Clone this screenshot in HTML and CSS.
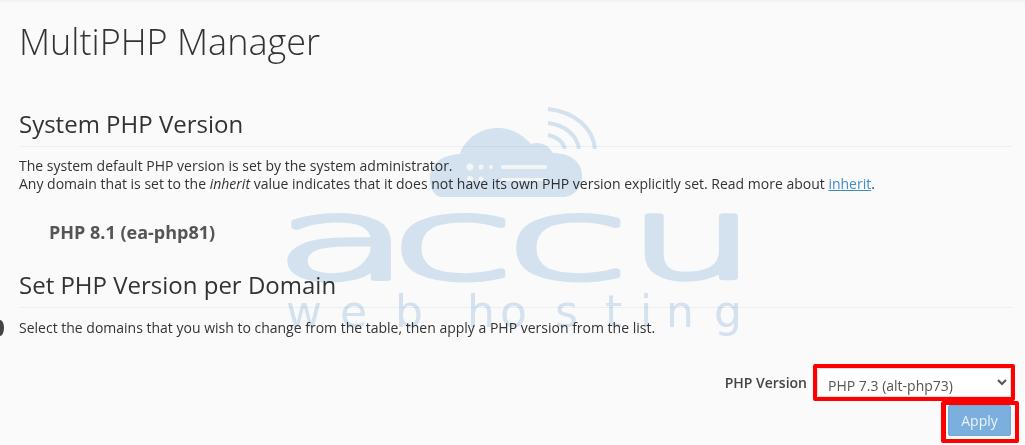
FILE: index.html
```html
<!DOCTYPE html>
<html lang="en">
<head>
    <meta charset="UTF-8">
    <title>MultiPHP Manager</title>
    <link rel="stylesheet" href="styles.css">
</head>
<body>
    <div class="side-dot"></div>
    <div id="app">
        <h1 class="page-title">MultiPHP Manager</h1>

        <h2 class="section-title first">System PHP Version</h2>
        <p class="text">
            The system default PHP version is set by the system administrator.<br>
            Any domain that is set to the <em>inherit</em> value indicates that it does not have its own PHP version explicitly set. Read more about <a href="#">inherit</a>.
        </p>
        <div class="current">PHP 8.1 (ea-php81)</div>

        <h2 class="section-title">Set PHP Version per Domain</h2>
        <p class="text text-select">Select the domains that you wish to change from the table, then apply a PHP version from the list.</p>

        <form class="version-form">
            <div class="version-row">
                <label for="version">PHP Version</label>
                <div class="mark">
                    <select id="version">
                        <option>PHP 7.3 (alt-php73)</option>
                    </select>
                </div>
            </div>
            <div class="mark-apply">
                <button class="btn">Apply</button>
            </div>
        </form>
    </div>

    <!-- watermark -->
    <svg class="watermark" width="1025" height="445" viewBox="0 0 1025 445">
        <path class="cloud" d="M440 197 C432 194 430 186 430 178 C430 164 441 155 460 154 C465 138 481 128 498 128 C511 128 522 134 531 144 C539 141 548 144 553 153 C570 153 582 162 582 175 C582 188 574 197 563 197 Z"/>
        <g class="waves">
            <path d="M548 135 C557 137 563 142 565 149"/>
            <path d="M548 123 C565 125 577 135 579 149"/>
            <path d="M548 109 C574 112 593 127 595 149"/>
        </g>
        <g fill="#fafafa">
            <circle cx="470" cy="167" r="3.5"/>
            <circle cx="481" cy="167" r="2.5"/>
            <circle cx="491" cy="167" r="2"/>
            <rect x="501" y="165" width="46" height="4" rx="2"/>
            <circle cx="470" cy="179" r="3"/>
            <circle cx="481" cy="179" r="2.5"/>
            <rect x="501" y="178" width="46" height="3" rx="1.5"/>
        </g>
        <text class="accu" transform="translate(274 278) scale(2 1)">a</text>
        <text class="accu" transform="translate(391 278) scale(2 1)">c</text>
        <text class="accu" transform="translate(506 278) scale(2 1)">c</text>
        <text class="accu" transform="translate(628 278) scale(1.8 1)">u</text>
        <text class="hosting" x="286 340 395 467 500 555 605 640 666 714" y="327">webhosting</text>
    </svg>
</body>
</html>
```

FILE: styles.css
```css
* {
    margin: 0;
    padding: 0;
    box-sizing: border-box;
}

html, body {
    height: 445px;
    overflow: hidden;
}

body {
    background: #fafafa;
    font-family: "Open Sans", "Liberation Sans", sans-serif;
    font-size: 14px;
    line-height: 18px;
    color: #333;
    position: relative;
}

#app {
    padding: 0 13px 0 19px;
    border-top: 2px solid #f3f3f3;
}

.page-title {
    margin-top: 15px;
    font-size: 36px;
    line-height: 50px;
    font-weight: 300;
}

.section-title {
    margin-top: 23px;
    padding-bottom: 6px;
    border-bottom: 1px solid #eee;
    font-size: 24px;
    line-height: 33px;
    font-weight: 400;
}
.section-title.first {
    margin-top: 40px;
}

.text {
    margin-top: 10px;
}
.text-select {
    margin-top: 11px;
}

a {
    color: #428bca;
}

.current {
    margin-top: 27px;
    margin-left: 30px;
    font-size: 18px;
    line-height: 25px;
    font-weight: 700;
    color: #555;
}

.version-form {
    margin-top: 27px;
    display: flex;
    flex-direction: column;
    align-items: flex-end;
}

.version-row {
    display: flex;
    align-items: center;
    gap: 6px;
    margin-right: -3px;
}
.version-row label {
    font-weight: 600;
    color: #444;
}

.mark {
    border: 4px solid #f00;
    border-radius: 2px;
}

select {
    display: block;
    width: 194px;
    height: 29px;
    padding: 5px 0 0 6px;
    border: 1px solid #ddd;
    border-radius: 2px;
    background: #fff;
    color: #555;
    font-family: inherit;
    font-size: 14px;
}

.mark-apply {
    margin-right: -7px;
    padding: 0 4px 3px 2px;
    border: 4px solid #f00;
    border-left-width: 5px;
    border-radius: 2px;
}

.btn {
    display: block;
    width: 63px;
    height: 31px;
    border: 1px solid #6fa8d8;
    border-radius: 2px;
    background: #7bb0de;
    color: #eaf3fb;
    font-family: inherit;
    font-size: 14px;
    cursor: pointer;
}

.side-dot {
    position: absolute;
    left: -4px;
    top: 320px;
    width: 8px;
    height: 16px;
    border-radius: 50%;
    background: #444;
}

.watermark {
    position: absolute;
    left: 0;
    top: 0;
    mix-blend-mode: multiply;
    pointer-events: none;
}

.cloud {
    fill: #d9e7f5;
}

.waves path {
    fill: none;
    stroke: #d9e7f5;
    stroke-width: 4;
}

.accu {
    font-family: "DejaVu Sans", sans-serif;
    font-size: 112px;
    font-weight: 200;
    fill: #d9e7f5;
    stroke: #d9e7f5;
    stroke-width: 8px;
    stroke-linejoin: round;
    vector-effect: non-scaling-stroke;
}

.hosting {
    font-family: "DejaVu Sans", sans-serif;
    font-size: 44px;
    fill: #d9e7f5;
}
```
